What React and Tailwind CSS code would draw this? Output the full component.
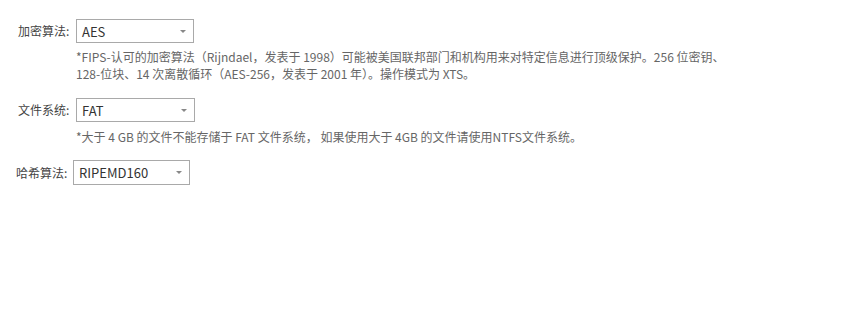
import React from "react";

const FONT = { fontFamily: '"Noto Sans CJK SC", "Noto Sans", sans-serif' };

const Select = ({ value, className = "" }) => (
  <div
    className={`relative flex h-[24px] items-center border border-[#a9a9a9] bg-white pl-[5px] text-[13px] text-[#333] ${className}`}
  >
    <span className="leading-none">{value}</span>
    <span className="absolute right-[7px] top-[10px] h-0 w-0 border-x-[3px] border-t-[3px] border-x-transparent border-t-[#888]" />
  </div>
);

const Row = ({ label, value, pad, width, children }) => (
  <div>
    <div className={`flex items-center ${pad}`}>
      <span className="w-[53px] text-[12px] text-[#444]">{label}</span>
      <Select value={value} className={width} />
    </div>
    {children}
  </div>
);

export default function App() {
  return (
    <div className="h-[315px] w-[858px] bg-white pt-[19px]" style={FONT}>
      <Row label="加密算法:" value="AES" pad="pl-[18px]" width="w-[118px] ml-[5px]">
        <p className="mt-[5px] pl-[76px] text-[12px] leading-[17px] text-[#666]">
          *FIPS-认可的加密算法（Rijndael，发表于 1998）可能被美国联邦部门和机构用来对特定信息进行顶级保护。256 位密钥、
          <br />
          128-位块、14 次离散循环（AES-256，发表于 2001 年）。操作模式为 XTS。
        </p>
      </Row>
      <div className="mt-[16px]">
        <Row label="文件系统:" value="FAT" pad="pl-[18px]" width="w-[119px] ml-[5px]">
          <p className="mt-[6px] pl-[76px] text-[12px] leading-[17px] text-[#666]">
            *大于 4 GB 的文件不能存储于 FAT 文件系统， 如果使用大于 4GB 的文件请使用NTFS文件系统。
          </p>
        </Row>
      </div>
      <div className="mt-[15px]">
        <Row label="哈希算法:" value="RIPEMD160" pad="pl-[16px]" width="w-[117px] ml-[4px] h-[25px]" />
      </div>
    </div>
  );
}
